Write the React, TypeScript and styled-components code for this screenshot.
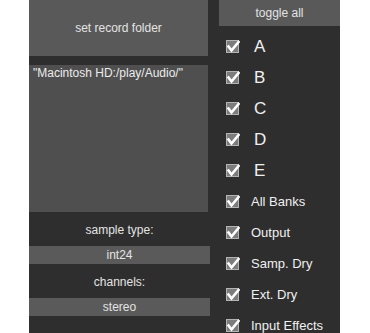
import React from "react";
import styled, { createGlobalStyle } from "styled-components";

const Global = createGlobalStyle`
  html, body { margin: 0; padding: 0; background: #ffffff; }
  body { font-family: "Liberation Sans", Arial, sans-serif; }
`;

const Panel = styled.div`
  margin-left: 29px;
  width: 311px;
  height: 333px;
  background: #2e2e2e;
  display: grid;
  grid-template-columns: 181px 121px;
  column-gap: 9px;
  overflow: hidden;
`;

const LeftCol = styled.div`
  display: flex;
  flex-direction: column;
`;

const BigButton = styled.div`
  width: 179px;
  height: 56px;
  background: #595959;
  color: #e4e4e4;
  font-size: 12px;
  display: flex;
  align-items: center;
  justify-content: center;
`;

const PathBox = styled.div`
  margin-top: 9px;
  width: 179px;
  height: 147px;
  background: #4f4f4f;
  color: #ececec;
  font-size: 12px;
  padding: 0 4px;
  line-height: 14px;
  padding-top: 1px;
  box-sizing: border-box;
`;

const Label = styled.div`
  height: 34px;
  display: flex;
  align-items: center;
  justify-content: center;
  color: #e4e4e4;
  font-size: 12px;
  padding-top: 2px;
  box-sizing: border-box;
`;

const Field = styled.div`
  height: 18px;
  background: #5a5a5a;
  color: #e4e4e4;
  font-size: 12px;
  display: flex;
  align-items: center;
  justify-content: center;
`;

const RightCol = styled.div`
  display: flex;
  flex-direction: column;
`;

const ToggleButton = styled.div`
  height: 26px;
  background: #595959;
  color: #e4e4e4;
  font-size: 12px;
  display: flex;
  align-items: center;
  justify-content: center;
`;

const List = styled.div`
  padding-top: 5px;
  padding-left: 7px;
  display: flex;
  flex-direction: column;
`;

const Row = styled.div`
  height: 31px;
  display: flex;
  align-items: center;
`;

const RowLabel = styled.span<{ $big?: boolean }>`
  color: #f0f0f0;
  font-size: ${(p) => (p.$big ? "17px" : "13px")};
  margin-left: ${(p) => (p.$big ? "14px" : "11px")};
  line-height: 1;
`;

const Check = () => (
  <svg width="14" height="14" viewBox="0 0 14 14" style={{ display: "block", flex: "none" }}>
    <rect x="0.5" y="0.5" width="12" height="12" fill="#7c7c7c" stroke="#b4b4b4" strokeWidth="1" />
    <path d="M2.5 6.5 L5.5 10.5 L12.5 2" fill="none" stroke="#ffffff" strokeWidth="2.6" strokeLinecap="square" />
  </svg>
);

const items: { label: string; big?: boolean }[] = [
  { label: "A", big: true },
  { label: "B", big: true },
  { label: "C", big: true },
  { label: "D", big: true },
  { label: "E", big: true },
  { label: "All Banks" },
  { label: "Output" },
  { label: "Samp. Dry" },
  { label: "Ext. Dry" },
  { label: "Input Effects" },
];

export default function App() {
  return (
    <>
      <Global />
      <Panel>
        <LeftCol>
          <BigButton>set record folder</BigButton>
          <PathBox>"Macintosh HD:/play/Audio/"</PathBox>
          <Label>sample type:</Label>
          <Field>int24</Field>
          <Label>channels:</Label>
          <Field>stereo</Field>
        </LeftCol>
        <RightCol>
          <ToggleButton>toggle all</ToggleButton>
          <List>
            {items.map((it) => (
              <Row key={it.label}>
                <Check />
                <RowLabel $big={it.big}>{it.label}</RowLabel>
              </Row>
            ))}
          </List>
        </RightCol>
      </Panel>
    </>
  );
}
